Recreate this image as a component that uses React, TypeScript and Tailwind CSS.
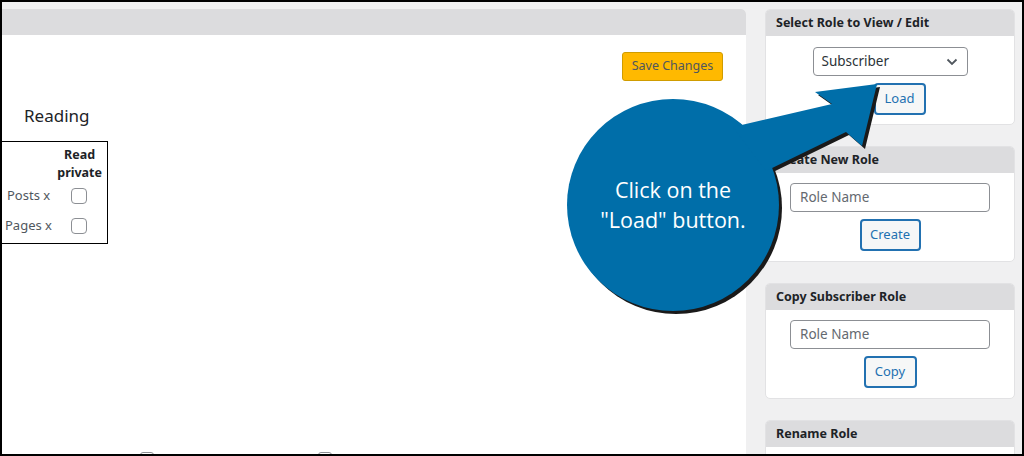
import React from "react";

const font = { fontFamily: '"Noto Sans", "Open Sans", "Liberation Sans", sans-serif' };

function Card({ title, children, className = "" }: { title: string; children?: React.ReactNode; className?: string }) {
  return (
    <div className={`shrink-0 w-[250px] rounded-[5px] bg-white border border-[#e2e2e4] overflow-hidden ${className}`}>
      <div className="h-[26px] bg-[#dcdcde] flex items-center pl-[10px] text-[12.5px] font-bold text-[#1d2327]">{title}</div>
      {children}
    </div>
  );
}

function Btn({ label, w }: { label: string; w: string }) {
  return (
    <div className={`${w} h-[32px] rounded-[4px] border-2 border-[#2271b1] bg-[#f6f7f7] text-[#2271b1] text-[13px] flex items-center justify-center`}>
      {label}
    </div>
  );
}

function Input() {
  return (
    <div className="w-[200px] h-[29px] rounded-[4px] border border-[#8c8f94] bg-white flex items-center pl-[9px] text-[13.5px] text-[#646970]">
      Role Name
    </div>
  );
}

function Box() {
  return <div className="w-[16px] h-[16px] rounded-[4px] border border-[#8c8f94] bg-white" />;
}

const ARROW = "M733 127 L832 104 L815 92 L877 84 L862 146 L846 132 L766 171 Z";

export default function App() {
  return (
    <div style={font} className="relative w-[1024px] h-[456px] border-2 border-black bg-[#f0f0f1] overflow-hidden flex">
      {/* Main panel */}
      <div className="mt-[7px] w-[744px] shrink-0 bg-white rounded-tr-[5px] flex flex-col relative">
        <div className="h-[26px] bg-[#dcdcde] rounded-tr-[5px]" />
        <div className="flex justify-end pr-[23px] pt-[17px]">
          <div className="w-[101px] h-[29px] rounded-[3px] border border-[#d09c00] bg-[#ffb900] text-[#50575e] text-[12.5px] flex items-center justify-center">
            Save Changes
          </div>
        </div>
        <div className="pl-[22px] mt-[24px] text-[17px] leading-[22px] text-[#1d2327]">Reading</div>
        <div className="mt-[14px] w-[106px] h-[103px] border-y border-r border-black flex flex-col">
          <div className="flex justify-end pr-[5px] pt-[4px]">
            <div className="text-[12.5px] font-bold leading-[18px] text-[#1d2327] text-center">
              Read<br />private
            </div>
          </div>
          <div className="flex items-center mt-[5px] h-[18px]">
            <span className="pl-[5px] w-[69px] text-[13px] text-[#50575e]">Posts x</span>
            <Box />
          </div>
          <div className="flex items-center mt-[12px] h-[18px]">
            <span className="pl-[3px] w-[69px] text-[13px] text-[#50575e]">Pages x</span>
            <Box />
          </div>
        </div>
        <div className="absolute left-[138px] top-[443px] w-[14px] h-[14px] rounded-[3px] border border-[#8c8f94]" />
        <div className="absolute left-[316px] top-[443px] w-[14px] h-[14px] rounded-[3px] border border-[#8c8f94]" />
      </div>

      {/* Sidebar */}
      <div className="flex flex-col pl-[19px] pt-[7px] gap-[21px]">
        <Card title="Select Role to View / Edit" className="h-[116px]">
          <div className="flex flex-col items-center pt-[11px] gap-[7px]">
            <div className="w-[155px] h-[29px] rounded-[4px] border border-[#8c8f94] bg-white flex items-center justify-between pl-[8px] pr-[8px] text-[13.5px] text-[#2c3338]">
              <span>Subscriber</span>
              <svg width="14" height="14" viewBox="0 0 14 14"><path d="M2.5 4.5 L7 9 L11.5 4.5" fill="none" stroke="#50575e" strokeWidth="1.8" /></svg>
            </div>
            <div className="ml-[19px]">
              <Btn label="Load" w="w-[52px]" />
            </div>
          </div>
        </Card>
        <Card title="Create New Role" className="h-[116px]">
          <div className="flex flex-col items-center pt-[10px] gap-[7px]">
            <Input />
            <Btn label="Create" w="w-[61px]" />
          </div>
        </Card>
        <Card title="Copy Subscriber Role" className="h-[116px]">
          <div className="flex flex-col items-center pt-[10px] gap-[7px]">
            <Input />
            <Btn label="Copy" w="w-[53px]" />
          </div>
        </Card>
        <Card title="Rename Role" className="h-[60px]" />
      </div>

      {/* Callout overlay */}
      <svg className="absolute left-0 top-0" width="1024" height="456" viewBox="0 0 1024 456">
        <g transform="translate(-2,-2)">
          <g transform="translate(3,3)" fill="#1a1a1a">
            <circle cx="673" cy="205" r="106" />
            <path d={ARROW} />
          </g>
          <g fill="#006ea9">
            <circle cx="673" cy="205" r="106" />
            <path d={ARROW} />
          </g>
        </g>
      </svg>
      <div className="absolute left-[571px] top-[173px] w-[200px] text-center text-white text-[21.5px] leading-[30px]" style={{ fontFamily: '"Open Sans", "Noto Sans", sans-serif' }}>
        Click on the<br />"Load" button.
      </div>
    </div>
  );
}
